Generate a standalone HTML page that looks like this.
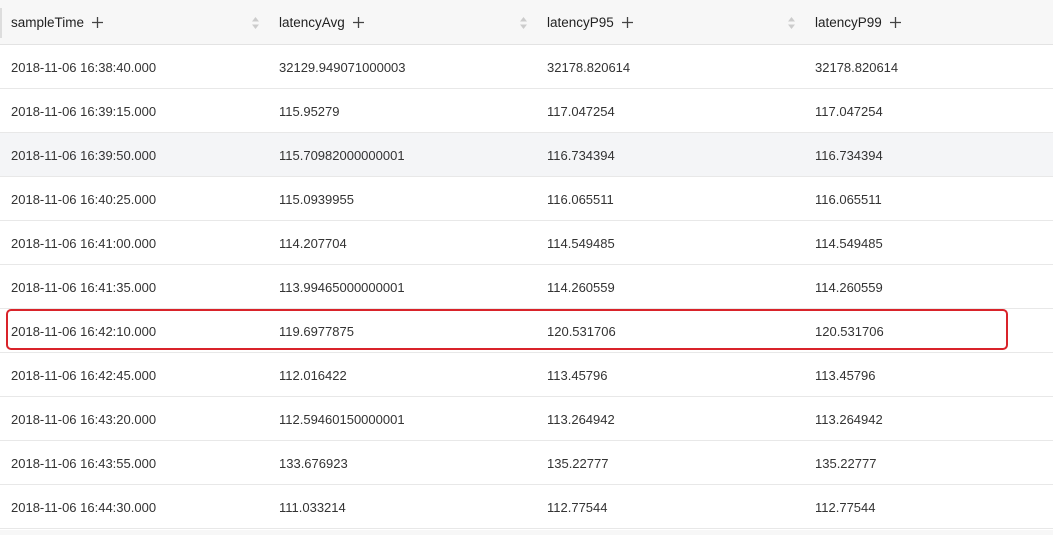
<!DOCTYPE html><html><head><style>
body{margin:0;width:1053px;height:535px;background:#fff;font-family:"Liberation Sans",Arial,sans-serif;font-size:13px;color:#333;position:relative;overflow:hidden}
.r{position:absolute;left:0;width:1053px;height:43px;border-bottom:1px solid #e8e8e8}
.c{position:absolute;top:0;line-height:45px;white-space:nowrap}
.h{background:#f7f7f7;height:44px;top:0;border-bottom:1px solid #e3e3e3;color:#222;font-size:13.5px}
.h .c{line-height:45px}
.p{width:11px;height:11px;margin-left:8px;vertical-align:-1px}
.s{position:absolute;top:16px;width:9px;height:14px}
.box{position:absolute;left:6px;top:309px;width:998px;height:37px;border:2px solid #d9232a;border-radius:5px}
</style></head><body>
<div class="r h"><div style="position:absolute;left:0;top:8px;width:2px;height:30px;background:#ddd"></div>
<div class="c" style="left:11px">sampleTime<svg class="p" viewBox="0 0 11 11"><path d="M5.5 0V11M0 5.5H11" stroke="#444" stroke-width="1.3"/></svg></div>
<svg class="s" style="left:251px" viewBox="0 0 9 14"><path d="M4.5 1L8 5.5H1Z M4.5 13L8 8.5H1Z" fill="#ccc"/></svg>
<div class="c" style="left:279px">latencyAvg<svg class="p" viewBox="0 0 11 11"><path d="M5.5 0V11M0 5.5H11" stroke="#444" stroke-width="1.3"/></svg></div>
<svg class="s" style="left:519px" viewBox="0 0 9 14"><path d="M4.5 1L8 5.5H1Z M4.5 13L8 8.5H1Z" fill="#ccc"/></svg>
<div class="c" style="left:547px">latencyP95<svg class="p" viewBox="0 0 11 11"><path d="M5.5 0V11M0 5.5H11" stroke="#444" stroke-width="1.3"/></svg></div>
<svg class="s" style="left:787px" viewBox="0 0 9 14"><path d="M4.5 1L8 5.5H1Z M4.5 13L8 8.5H1Z" fill="#ccc"/></svg>
<div class="c" style="left:815px">latencyP99<svg class="p" viewBox="0 0 11 11"><path d="M5.5 0V11M0 5.5H11" stroke="#444" stroke-width="1.3"/></svg></div>
</div>
<div class="r" style="top:45px"><div class="c" style="left:11px">2018-11-06 16:38:40.000</div><div class="c" style="left:279px">32129.949071000003</div><div class="c" style="left:547px">32178.820614</div><div class="c" style="left:815px">32178.820614</div></div>
<div class="r" style="top:89px"><div class="c" style="left:11px">2018-11-06 16:39:15.000</div><div class="c" style="left:279px">115.95279</div><div class="c" style="left:547px">117.047254</div><div class="c" style="left:815px">117.047254</div></div>
<div class="r" style="top:133px;background:#f4f5f7"><div class="c" style="left:11px">2018-11-06 16:39:50.000</div><div class="c" style="left:279px">115.70982000000001</div><div class="c" style="left:547px">116.734394</div><div class="c" style="left:815px">116.734394</div></div>
<div class="r" style="top:177px"><div class="c" style="left:11px">2018-11-06 16:40:25.000</div><div class="c" style="left:279px">115.0939955</div><div class="c" style="left:547px">116.065511</div><div class="c" style="left:815px">116.065511</div></div>
<div class="r" style="top:221px"><div class="c" style="left:11px">2018-11-06 16:41:00.000</div><div class="c" style="left:279px">114.207704</div><div class="c" style="left:547px">114.549485</div><div class="c" style="left:815px">114.549485</div></div>
<div class="r" style="top:265px"><div class="c" style="left:11px">2018-11-06 16:41:35.000</div><div class="c" style="left:279px">113.99465000000001</div><div class="c" style="left:547px">114.260559</div><div class="c" style="left:815px">114.260559</div></div>
<div class="r" style="top:309px"><div class="c" style="left:11px">2018-11-06 16:42:10.000</div><div class="c" style="left:279px">119.6977875</div><div class="c" style="left:547px">120.531706</div><div class="c" style="left:815px">120.531706</div></div>
<div class="r" style="top:353px"><div class="c" style="left:11px">2018-11-06 16:42:45.000</div><div class="c" style="left:279px">112.016422</div><div class="c" style="left:547px">113.45796</div><div class="c" style="left:815px">113.45796</div></div>
<div class="r" style="top:397px"><div class="c" style="left:11px">2018-11-06 16:43:20.000</div><div class="c" style="left:279px">112.59460150000001</div><div class="c" style="left:547px">113.264942</div><div class="c" style="left:815px">113.264942</div></div>
<div class="r" style="top:441px"><div class="c" style="left:11px">2018-11-06 16:43:55.000</div><div class="c" style="left:279px">133.676923</div><div class="c" style="left:547px">135.22777</div><div class="c" style="left:815px">135.22777</div></div>
<div class="r" style="top:485px"><div class="c" style="left:11px">2018-11-06 16:44:30.000</div><div class="c" style="left:279px">111.033214</div><div class="c" style="left:547px">112.77544</div><div class="c" style="left:815px">112.77544</div></div>
<div style="position:absolute;top:530px;left:0;width:1053px;height:5px;background:#f7f7f7"></div>
<div class="box"></div>
</body></html>
